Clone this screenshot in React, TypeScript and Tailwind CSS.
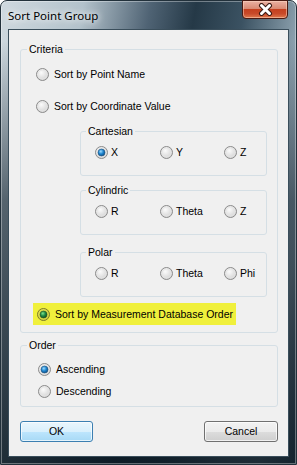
import React from 'react';

type RadioProps = { checked?: boolean; highlight?: boolean };

// Win7-style radio glyph
function RadioGlyph({ checked, highlight }: RadioProps) {
  const id = highlight ? 'h' : checked ? 'c' : 'u';
  return (
    <svg width="13" height="13" viewBox="0 0 13 13" className="shrink-0">
      <defs>
        <radialGradient id={`ring-${id}`} cx="0.4" cy="0.35" r="0.7">
          <stop offset="0" stopColor={highlight ? '#f4f260' : '#fbfbfb'} />
          <stop offset="1" stopColor={highlight ? '#c8c836' : '#d0d0d0'} />
        </radialGradient>
        <radialGradient id={`dot-${id}`} cx="0.4" cy="0.35" r="0.7">
          <stop offset="0" stopColor={highlight ? '#7ee08a' : '#9fdcff'} />
          <stop offset="0.5" stopColor={highlight ? '#1f8a45' : '#1f86d0'} />
          <stop offset="1" stopColor={highlight ? '#0d4a24' : '#0b4f88'} />
        </radialGradient>
      </defs>
      <circle cx="6.5" cy="6.5" r="6" fill={`url(#ring-${id})`} stroke={highlight ? '#7d7b2a' : '#8b8b8b'} strokeWidth="1" />
      <circle cx="6.5" cy="6.5" r="4.5" fill="none" stroke={highlight ? '#d6d44a' : '#e4e4e4'} strokeWidth="0.8" />
      {checked && <circle cx="6.5" cy="6.5" r="3.5" fill={`url(#dot-${id})`} stroke={highlight ? '#234d1e' : '#1d4f7a'} strokeWidth="0.6" />}
    </svg>
  );
}

function Radio({ label, checked, highlight, gap = 'gap-[5px]' }: RadioProps & { label: string; gap?: string }) {
  return (
    <div className={`flex items-center h-[16px] whitespace-nowrap ${gap}`}>
      <RadioGlyph checked={checked} highlight={highlight} />
      <span className="leading-[16px]">{label}</span>
    </div>
  );
}

function SubGroup({ title, items, checkedIndex = -1, className = '' }: { title: string; items: string[]; checkedIndex?: number; className?: string }) {
  return (
    <fieldset className={`border border-[#d5dfe5] rounded-[3px] ml-[59px] mr-[10px] pb-[15px] ${className}`}>
      <legend className="ml-[5px] px-[2px] leading-[13px]">{title}</legend>
      <div className="grid grid-cols-[65px_64px_auto] mt-[6px] pl-[14px]">
        {items.map((it, i) => (
          <Radio key={i} label={it} checked={i === checkedIndex} gap="gap-[3px]" />
        ))}
      </div>
    </fieldset>
  );
}

export default function App() {
  return (
    <div className="w-[297px] h-[465px] font-['Liberation_Sans',Arial,sans-serif] font-normal text-[10.5px] text-black">
      {/* Window frame */}
      <div className="w-full h-full flex flex-col rounded-t-[7px] border border-[#22313b] shadow-[inset_0_0_0_1px_rgba(255,255,255,0.35)] bg-[linear-gradient(180deg,rgba(12,28,40,0)_0px,rgba(12,28,40,0)_40px,rgba(12,28,40,0.6)_200px,rgba(10,24,34,0.88)_465px),linear-gradient(100deg,#cfd9df_0%,#b3c2cb_22%,#4f6374_40%,#253947_52%,#3b5262_65%,#8ca1ae_80%,#a7b7c1_90%,#5f7787_100%)]">
        {/* Title bar */}
        <div className="h-[28px] flex items-start justify-between pl-[7px] pr-[8px] shrink-0">
          <div className="pt-[7px] font-['Noto_Sans',sans-serif] text-[11.5px] leading-[16px] [text-shadow:0_0_6px_#fff,0_0_10px_#fff]">
            Sort Point Group
          </div>
          <div className="w-[46px] h-[19px] -mt-px flex items-center justify-center rounded-b-[4px] border border-[#4a1a12] bg-[linear-gradient(180deg,#eab1a3_0%,#d98a74_45%,#c5401f_50%,#c84a2a_75%,#e0794d_100%)] shadow-[inset_0_0_0_1px_rgba(255,220,200,0.5)]">
            <svg width="15" height="13" viewBox="0 0 15 13">
              <path d="M3.5 2.5 L11.5 10.5 M11.5 2.5 L3.5 10.5" stroke="#3a1a14" strokeWidth="5" strokeLinecap="round" />
              <path d="M3.5 2.5 L11.5 10.5 M11.5 2.5 L3.5 10.5" stroke="#ffffff" strokeWidth="3" strokeLinecap="round" />
            </svg>
          </div>
        </div>

        {/* Client area */}
        <div className="mx-[7px] mb-[7px] flex-1 border border-[#3a4e5b] bg-[#f0f0f0] pl-[11px] pr-[10px] pt-[13px] flex flex-col">
          {/* Criteria */}
          <fieldset className="border border-[#d5dfe5] rounded-[3px] pb-[7px]">
            <legend className="ml-[6px] px-[2px] leading-[13px]">Criteria</legend>
            <div className="pl-[15px] mt-[10px]">
              <Radio label="Sort by Point Name" />
            </div>
            <div className="pl-[15px] mt-[16px]">
              <Radio label="Sort by Coordinate Value" />
            </div>
            <SubGroup title="Cartesian" items={['X', 'Y', 'Z']} checkedIndex={0} className="mt-[11px]" />
            <SubGroup title="Cylindric" items={['R', 'Theta', 'Z']} className="mt-[8px]" />
            <SubGroup title="Polar" items={['R', 'Theta', 'Phi']} className="mt-[11px]" />
            <div className="ml-[12px] mt-[6px] w-[203px] h-[22px] bg-[#f0f03c] pl-[4px] flex items-center">
              <Radio label="Sort by Measurement Database Order" checked highlight />
            </div>
          </fieldset>

          {/* Order */}
          <fieldset className="border border-[#d5dfe5] rounded-[3px] mt-[6px] pb-[7px]">
            <legend className="ml-[6px] px-[2px] leading-[13px]">Order</legend>
            <div className="mt-[9px] pl-[17px]">
              <Radio label="Ascending" checked />
            </div>
            <div className="mt-[6px] pl-[17px]">
              <Radio label="Descending" />
            </div>
          </fieldset>

          {/* Buttons */}
          <div className="flex justify-between mt-[14px]">
            <button className="w-[73px] h-[21px] rounded-[3px] border border-[#3c7fb1] bg-[linear-gradient(180deg,#eaf6fd_0%,#d9f0fc_50%,#bee6fd_50%,#a7d9f5_100%)] shadow-[inset_0_0_0_1px_rgba(255,255,255,0.7)] text-[10.5px] leading-[19px]">
              OK
            </button>
            <button className="w-[74px] h-[21px] rounded-[3px] border border-[#707070] bg-[linear-gradient(180deg,#f2f2f2_0%,#ebebeb_50%,#dddddd_50%,#cfcfcf_100%)] shadow-[inset_0_0_0_1px_rgba(255,255,255,0.7)] text-[10.5px] leading-[19px]">
              Cancel
            </button>
          </div>
        </div>
      </div>
    </div>
  );
}
